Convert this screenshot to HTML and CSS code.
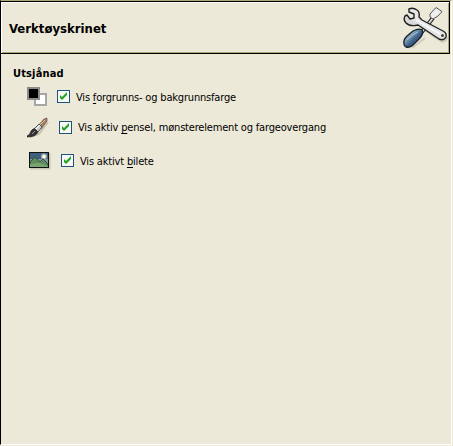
FILE: index.html
```html
<!DOCTYPE html>
<html lang="nn">
<head>
<meta charset="utf-8">
<title>Verktøyskrinet</title>
<link rel="stylesheet" href="styles.css">
</head>
<body>
<div class="panel">
  <header class="header">
    <h1 class="title">Verktøyskrinet</h1>
    <svg class="tools" width="46" height="46" viewBox="0 0 46 46">
      <defs>
        <linearGradient id="steel" x1="0" y1="1" x2="1" y2="0"><stop offset="0" stop-color="#b5b5b5"/><stop offset=".5" stop-color="#e8e8e8"/><stop offset="1" stop-color="#ddd"/></linearGradient>
        <linearGradient id="handle" x1="0" y1="0" x2="1" y2="1"><stop offset="0" stop-color="#6289ae"/><stop offset=".35" stop-color="#86a2bd"/><stop offset=".55" stop-color="#3f6288"/><stop offset="1" stop-color="#18324f"/></linearGradient>
      </defs>
      <path d="M10 44L23 34M20 24L40 38Q45 37 45 33" fill="none" stroke="#8c8876" stroke-width="2" opacity=".3"/>
      <path d="M19 29L31 14" stroke="#222" stroke-width="4"/>
      <path d="M19 29L31 14" stroke="#ddd" stroke-width="2"/>
      <path d="M28 10L34 3.500 40 7.500 36 12 31 15 28 13Z" fill="#eee" stroke="#555" stroke-width="1" stroke-linejoin="round"/>
      <path d="M2 40Q1 36 5 32L11 27Q17 24 20 26Q22 29 18 34L11 41Q8 44 4 43Q2 42 2 40Z" fill="url(#handle)" stroke="#14212f" stroke-width="1.300"/>
      <path d="M5 36Q9 31 16 28" stroke="#a8bfd2" fill="none"/>
      <path d="M7 5Q11 3 15 6Q18 8 17 13L20 16 41 27Q45 29 44 33Q42 37 37 35L16 21Q8 23 4 19Q1 16 3 12L5 11 8 15 12 14 12 10 7 8Z" fill="url(#steel)" stroke="#222" stroke-width="1.400" stroke-linejoin="round"/>
      <path d="M14 16L38 30" stroke="#f7f7f7" stroke-width="2"/>
      <circle cx="40.500" cy="31.500" r="1.500" fill="#444"/>
    </svg>
  </header>
  <main class="content">
    <h2 class="heading">Utsjånad</h2>
    <label class="row row-colors">
      <svg class="icon" width="22" height="22" viewBox="0 0 22 22">
        <rect x="8" y="8" width="11" height="11" fill="#fff" stroke="#a6a6a6" stroke-width="2"/>
        <rect x="1" y="2" width="11" height="11" fill="#000" stroke="#8b8b8b" stroke-width="2"/>
      </svg>
      <svg class="check" width="13" height="13" viewBox="0 0 13 13"><rect x=".5" y=".5" width="12" height="12" fill="#f7f7f4" stroke="#1c5180"/><path d="M3 5V8L5 10 10 5V2L5 7Z" fill="#21a121"/></svg>
      <span class="label">Vis <u>f</u>orgrunns- og bakgrunnsfarge</span>
    </label>
    <label class="row row-brush">
      <svg class="icon" width="22" height="22" viewBox="0 0 22 22">
        <path d="M3 20L12 17 21 5" stroke="#aaa693" stroke-width="2" fill="none" opacity=".6"/>
        <path d="M11 9L17 2 20 1 20 4 14 12Z" fill="#a67c60" stroke="#685344" stroke-width=".7"/>
        <path d="M12 9L18 3" stroke="#e0bda1"/>
        <path d="M7 12L12 7 15 10 11 15Z" fill="#ccc" stroke="#555"/>
        <path d="M9 12L13 8" stroke="#fff"/>
        <path d="M0 19Q3 18 4 14Q6 11 8 12L11 15Q9 20 0 20Z" fill="#333" stroke="#151515" stroke-width=".6"/>
        <path d="M5 17L8 14" stroke="#999"/>
      </svg>
      <svg class="check" width="13" height="13" viewBox="0 0 13 13"><rect x=".5" y=".5" width="12" height="12" fill="#f7f7f4" stroke="#1c5180"/><path d="M3 5V8L5 10 10 5V2L5 7Z" fill="#21a121"/></svg>
      <span class="label">Vis aktiv <u>p</u>ensel, mønsterelement og fargeovergang</span>
    </label>
    <label class="row row-image">
      <svg class="icon" width="22" height="18" viewBox="0 0 22 18">
        <rect x="1" y="1" width="20.500" height="16.500" fill="#aaa693" opacity=".5"/>
        <rect x=".5" y=".5" width="19" height="15" fill="#3e5f7d"/>
        <rect x="1" y="7" width="18" height="5" fill="#8296a3"/>
        <circle cx="15" cy="4.500" r="3.200" fill="#8d9fa9"/><circle cx="15" cy="4.500" r="1.900" fill="#fff9d5"/>
        <path d="M1 10L6 5 11 10 14 7 19 12V15H1Z" fill="#5e8c5c" stroke="#23452d" stroke-width=".8"/>
        <path d="M1 12L10 11 19 14V15H1Z" fill="#7ba473"/>
        <rect x=".5" y=".5" width="19" height="15" fill="none" stroke="#111"/>
      </svg>
      <svg class="check" width="13" height="13" viewBox="0 0 13 13"><rect x=".5" y=".5" width="12" height="12" fill="#f7f7f4" stroke="#1c5180"/><path d="M3 5V8L5 10 10 5V2L5 7Z" fill="#21a121"/></svg>
      <span class="label">Vis aktivt <u>b</u>ilete</span>
    </label>
  </main>
</div>
</body>
</html>
```
FILE: styles.css
```css
* { box-sizing: border-box; }
body {
  margin: 0;
  height: 446px;
  overflow: hidden;
  background: #ece9d8;
  color: #000;
  font-family: Tahoma, "DejaVu Sans Condensed", "DejaVu Sans", sans-serif;
  font-stretch: condensed;
}
.panel {
  width: 452px;
  height: 445px;
  border-top: 1px solid #aca878;
  border-left: 1px solid #000;
  border-right: 1px solid #fff;
  border-bottom: 1px solid #fff;
}
.header {
  display: flex;
  align-items: center;
  justify-content: space-between;
  width: 449px;
  height: 53px;
  padding: 0 0 0 7px;
  border: solid #000;
  border-width: 1px 1px 1px 0;
  box-shadow: inset 1px 1px #fff, inset -1px -1px #aca878;
}
.title {
  margin: 2px 0 0 1px;
  font-size: 13px;
  line-height: 18px;
  font-weight: bold;
  letter-spacing: 0;
}
.tools { flex: none; margin: 0 1px 2px 0; }
.content { padding: 11px 0 0 12px; }
.heading {
  margin: 0;
  font-size: 11px;
  line-height: 17px;
  height: 16px;
  font-weight: bold;
  letter-spacing: 0.15px;
}
.row { display: flex; align-items: center; }
.row-colors { height: 22px; margin: 5px 0 0 14px; }
.row-brush { height: 22px; margin: 9px 0 0 14px; }
.row-image { height: 18px; margin: 13px 0 0 16px; }
.icon { flex: none; }
.check { flex: none; margin: 0 0 1px 8px; }
.row-brush .check, .row-image .check { margin-left: 10px; }
.label {
  margin-left: 6px;
  font-size: 11px;
  line-height: 14px;
  letter-spacing: -0.18px;
  white-space: nowrap;
}
.row-colors .label, .row-image .label { padding-top: 1px; }
u { text-decoration-thickness: 1px; text-underline-offset: 2px; }
```
